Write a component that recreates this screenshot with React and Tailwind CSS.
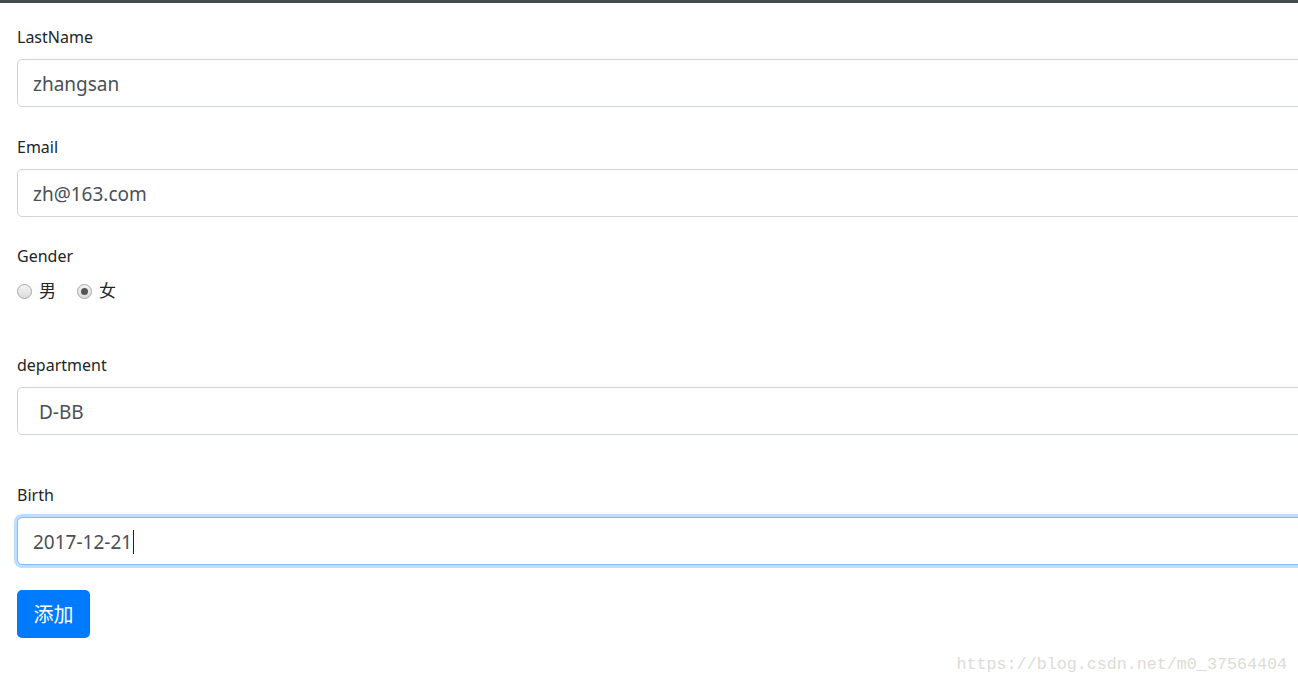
import React from 'react'

const font = { fontFamily: '"Noto Sans", "Noto Sans CJK SC", sans-serif' }

function Field({ label, value, className = '', inputClass = '', focused = false }) {
  return (
    <div className={className}>
      <label className="block text-[16px] leading-6 text-[#212529]">{label}</label>
      <div
        className={
          'mt-[10px] flex h-[48px] w-[1320px] items-center rounded-[5px] border bg-white pt-[2px] text-[19px] text-[#495057] ' +
          (focused
            ? 'border-[#80bdff] shadow-[0_0_0_3px_rgba(0,123,255,0.25)] '
            : 'border-[#ced4da] ') +
          inputClass
        }
      >
        <span>{value}</span>
        {focused && <span className="ml-px inline-block h-[24px] w-px bg-[#222]" />}
      </div>
    </div>
  )
}

function Radio({ checked, label }) {
  return (
    <span className="flex items-center">
      <span className="flex h-[15px] w-[15px] items-center justify-center rounded-full border border-[#a6a6a6] bg-gradient-to-b from-[#f4f4f4] to-[#dcdcdc]">
        {checked && <span className="h-[7px] w-[7px] rounded-full bg-[#555]" />}
      </span>
      <span className="ml-[7px] text-[17px] text-[#212529]">{label}</span>
    </span>
  )
}

export default function App() {
  return (
    <div className="relative h-[685px] w-full overflow-hidden bg-white" style={font}>
      <div className="h-[3px] w-full bg-[#464b50]" />
      <form className="px-[17px] pt-[22px]">
        <Field label="LastName" value="zhangsan" inputClass="pl-[15px]" />
        <Field label="Email" value="zh@163.com" className="mt-[28px]" inputClass="pl-[15px]" />

        <div className="mt-[27px]">
          <label className="block text-[16px] leading-6 text-[#212529]">Gender</label>
          <div className="mt-[11px] flex h-6 items-center gap-[21px]">
            <Radio label="男" />
            <Radio checked label="女" />
          </div>
        </div>

        <Field label="department" value="D-BB" className="mt-[50px]" inputClass="pl-[21px]" />
        <Field label="Birth" value="2017-12-21" className="mt-[48px]" inputClass="pl-[15px]" focused />

        <button
          type="button"
          className="mt-[25px] flex h-[48px] w-[73px] items-center justify-center rounded-[5px] bg-[#007bff] pt-[2px] text-[20px] text-white"
        >
          添加
        </button>
      </form>

      <div
        className="absolute right-[11px] top-[653px] text-[16.7px] leading-6 text-[#dcdcd6]"
        style={{ fontFamily: '"Liberation Mono", monospace' }}
      >
        https://blog.csdn.net/m0_37564404
      </div>
    </div>
  )
}
